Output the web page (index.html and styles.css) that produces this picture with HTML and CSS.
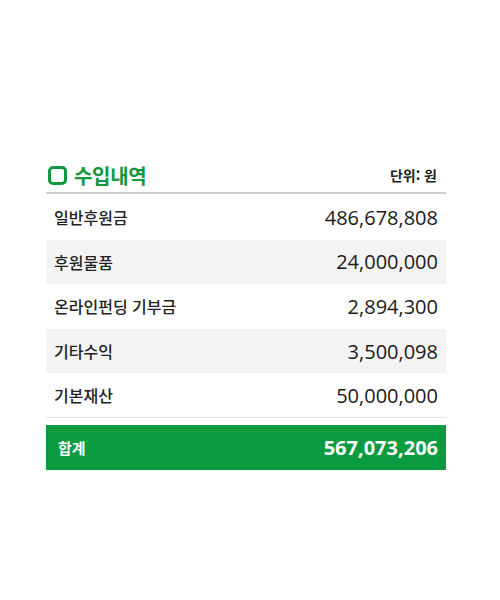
FILE: index.html
```html
<!doctype html>
<html lang="ko">
<head>
<meta charset="utf-8">
<title>수입내역</title>
<link rel="stylesheet" href="styles.css">
</head>
<body>

<div id="income">

	<div class="head">
		<h2><span class="box"></span>수입내역</h2>
		<span class="unit">단위: 원</span>
	</div>

	<table class="list">
		<tr><td>일반후원금</td><td class="num">486,678,808</td></tr>
		<tr class="alt"><td>후원물품</td><td class="num">24,000,000</td></tr>
		<tr><td>온라인펀딩 기부금</td><td class="num">2,894,300</td></tr>
		<tr class="alt"><td>기타수익</td><td class="num">3,500,098</td></tr>
		<tr class="last"><td>기본재산</td><td class="num">50,000,000</td></tr>
	</table>

	<div class="total">
		<span>합계</span>
		<span class="num">567,073,206</span>
	</div>

</div>

</body>
</html>
```

FILE: styles.css
```css
* { margin: 0; padding: 0; box-sizing: border-box; }
html, body { background: #fff; }

body {
	font-family: "Noto Sans CJK KR", "Noto Sans", sans-serif;
	color: #222;
}

#income {
	width: 400px;
	margin: 158px 0 0 46px;
}

.head {
	display: flex;
	align-items: center;
	justify-content: space-between;
	height: 36px;
	border-bottom: 2px solid #cfcfcf;
}
.head > h2 {
	display: flex;
	align-items: center;
	font-size: 20px;
	font-weight: bold;
	color: #13973c;
	letter-spacing: -0.3px;
}
.box {
	width: 19px; height: 19px;
	margin: 0 7px 0 2px;
	border: 3px solid #13973c;
	border-radius: 5px;
}
.unit {
	font-size: 14px;
	font-weight: bold;
	padding-right: 9px;
	color: #222;
}

.list {
	width: 100%;
	border-collapse: collapse;
	margin-top: 1px;
}
.list td {
	height: 44.6px;
	padding: 0 8px;
	font-size: 16px;
	font-weight: 500;
}
.list tr.alt td { background: #f3f3f3; }
.list tr.last td { border-bottom: 1px solid #d3e5ec; }

.num {
	text-align: right;
	font-family: "Open Sans", "Noto Sans", sans-serif;
	font-size: 20px !important;
	font-weight: normal !important;
	color: #1a1a1a;
}

.total {
	display: flex;
	align-items: center;
	justify-content: space-between;
	height: 45px;
	margin-top: 7px;
	padding: 0 8px 0 12px;
	background: #0a9a40;
	color: #fff;
	font-size: 15px;
	font-weight: bold;
}
.total > .num {
	color: #fff;
	font-weight: bold !important;
}
```
